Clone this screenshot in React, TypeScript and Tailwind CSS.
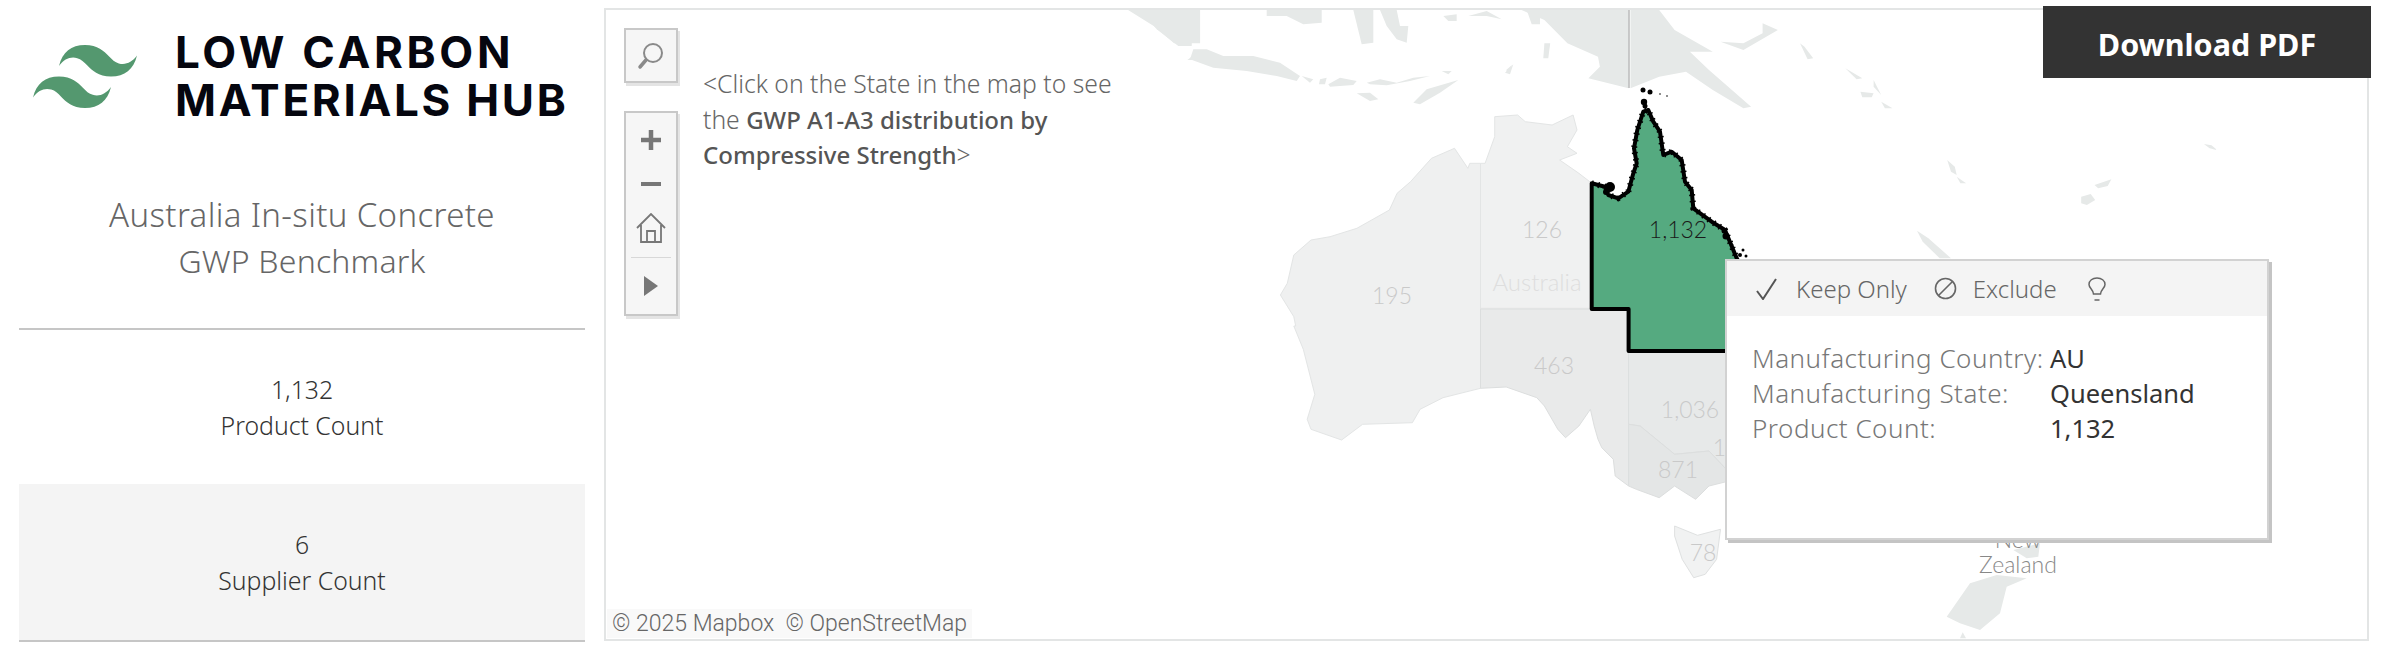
import React from "react";

type P = number[];
const conv = (ox: number, oy: number, sx: number, sy: number, a: P) => {
  const out: string[] = [];
  for (let i = 0; i < a.length; i += 2) out.push(`${(ox + a[i] / sx).toFixed(1)},${(oy + a[i + 1] / sy).toFixed(1)}`);
  return out.join(" ");
};
const z4 = (a: P) => conv(1200, 0, 2.613, 3, a);
const z5 = (a: P) => conv(1200, 326, 2.613, 3, a);
const z7 = (a: P) => conv(1800, 0, 2.649, 3, a);
const z9 = (a: P) => conv(1900, 500, 3, 3, a);
const z11 = (a: P) => conv(1120, 6, 3, 3, a);

const WA =
  z4([733, 490, 705, 490, 700, 505, 665, 445, 605, 475, 550, 545, 515, 580, 495, 630, 410, 685, 340, 710, 290, 720, 245, 765, 228, 850, 210, 885, 245, 950, 250, 978]) +
  " " +
  z5([245, 0, 270, 70, 300, 205, 280, 280, 290, 310, 370, 342, 425, 295, 555, 290, 575, 250, 635, 215, 733, 187]);
const NT = z4([733, 490, 745, 490, 770, 410, 770, 350, 830, 345, 850, 365, 920, 375, 975, 345, 985, 390, 960, 440, 985, 460, 940, 480, 990, 520, 1022, 548, 1022, 925, 733, 925]);
const SA =
  "1480.5,309 1628.6,309 " +
  z5([1120, 480, 1085, 450, 1080, 400, 1050, 365, 1040, 340, 1030, 300, 1020, 250, 990, 300, 955, 335, 935, 310, 900, 240, 880, 215, 800, 183, 733, 187]);
const NSW = z5([1120, 75, 1400, 75, 1400, 440, 1375, 430, 1330, 375, 1240, 385, 1150, 300, 1120, 295]);
const VIC = z5([1120, 295, 1150, 300, 1240, 385, 1330, 375, 1375, 430, 1400, 460, 1330, 480, 1295, 520, 1240, 480, 1200, 515, 1140, 490, 1120, 480]);
const TAS = z5([1240, 600, 1300, 628, 1360, 610, 1350, 700, 1320, 745, 1290, 755, 1260, 700, 1240, 630]);
const COAST = conv(1580, 80, 3, 3, [35, 310, 75, 320, 85, 345, 115, 355, 145, 335, 160, 280, 170, 250, 162, 205, 172, 150, 190, 95, 205, 90, 220, 125, 240, 155, 250, 225, 275, 215, 305, 240, 315, 305, 335, 330, 340, 385, 395, 425, 435, 450, 460, 510, 470, 535]);
const QLD = COAST + " 1760,300 1760,351 1628.6,351 1628.6,309 1591.7,309";

const lands: string[] = [
  z4([840, 30, 1120, 30, 1120, 265, 1015, 235, 1045, 200, 1040, 170, 960, 130, 900, 60]),
  z4([1125, 30, 1200, 30, 1240, 90, 1340, 155, 1280, 155, 1330, 210, 1440, 320, 1420, 325, 1340, 270, 1270, 215, 1200, 230, 1125, 265]),
  z4([1360, 125, 1420, 150, 1510, 90, 1470, 70, 1470, 100, 1420, 130]),
  z4([900, 130, 915, 130, 910, 175, 897, 175]),
  z4([800, 210, 815, 195, 805, 220]),
  z11([60, 12, 220, 12, 215, 120, 175, 120, 110, 70]),
  z11([220, 130, 260, 130, 310, 150, 400, 150, 480, 170, 540, 210, 530, 225, 470, 210, 380, 195, 280, 185, 210, 160]),
  z11([545, 210, 580, 220, 570, 230]),
  z11([600, 220, 620, 215, 615, 235, 597, 235]),
  z11([625, 235, 660, 215, 710, 225, 700, 237, 630, 242]),
  z11([740, 230, 780, 220, 830, 230, 880, 215, 930, 210, 870, 225, 800, 238, 750, 235]),
  z11([710, 262, 750, 260, 775, 280, 750, 285]),
  z11([880, 290, 920, 250, 1015, 222, 960, 260, 900, 295]),
  z11([965, 195, 995, 195, 985, 205]),
  z11([1155, 200, 1180, 175, 1170, 205]),
  z11([440, 12, 605, 12, 605, 50, 550, 55, 500, 30, 440, 30]),
  z11([700, 12, 760, 12, 760, 110, 725, 115]),
  z11([780, 12, 830, 12, 840, 60, 865, 60, 860, 110, 830, 100, 800, 60]),
  z11([970, 30, 1010, 25, 1010, 45, 985, 45]),
  z11([1045, 30, 1100, 15, 1145, 40, 1100, 30]),
  z11([1220, 12, 1260, 12, 1260, 55, 1235, 55]),
  conv(600, 0, 2.613, 3, [1380, 30, 1568, 30, 1568, 130, 1500, 130, 1450, 80]),
  conv(600, 0, 2.613, 3, [1535, 180, 1568, 150, 1568, 180]),
  z7([0, 130, 12, 140, 35, 175, 20, 178]),
  z7([120, 205, 165, 235, 150, 238]),
  z7([195, 240, 215, 285, 195, 260]),
  z7([160, 275, 195, 280, 190, 292, 165, 292]),
  z7([215, 305, 245, 325, 225, 325]),
  z7([390, 480, 410, 500, 415, 525, 400, 515]),
  z7([415, 530, 440, 550, 425, 550]),
  z7([310, 692, 340, 715, 400, 775, 370, 775, 325, 725]),
  z7([745, 590, 770, 582, 782, 600, 760, 615, 745, 610]),
  z7([780, 555, 825, 538, 815, 558, 790, 565]),
  z7([1070, 432, 1090, 436, 1105, 450, 1085, 445]),
  z9([140, 350, 210, 250, 290, 225, 380, 235, 320, 260, 300, 340, 240, 390, 180, 370]),
  z9([180, 415, 188, 397, 198, 415]),
  z9([340, 150, 420, 130, 415, 170, 380, 175]),
];

const labels: [string, number, number, string, number][] = [
  ["126", 1542, 238, "#c9c9c9", 23],
  ["195", 1392, 304, "#c9c9c9", 23],
  ["Australia", 1537, 291, "#dedede", 24],
  ["463", 1554, 374, "#c9c9c9", 23],
  ["1,036", 1690, 418, "#c9c9c9", 23],
  ["871", 1678, 478, "#c9c9c9", 23],
  ["15", 1726, 456, "#c9c9c9", 23],
  ["78", 1703, 561, "#c9c9c9", 23],
  ["New", 2018, 548, "#888888", 23],
  ["Zealand", 2018, 573, "#888888", 23],
];

function MapArt() {
  return (
    <svg className="absolute left-0 top-0" width={1761} height={629} viewBox="606 10 1761 629">
      <g className="blur-[0.7px]">
        {lands.map((p, i) => (
          <polygon key={i} points={p} fill="#e6e9e8" />
        ))}
      </g>
      <line x1="1629" y1="10" x2="1629" y2="88" stroke="#b8b8b8" strokeWidth="1.5" />
      <polygon points={WA} fill="#eff0f0" stroke="#e3e5e5" strokeWidth="1" />
      <polygon points={NT} fill="#f0f1f1" stroke="#e3e5e5" strokeWidth="1" />
      <polygon points={SA} fill="#e9eaea" stroke="#dcdede" strokeWidth="1" />
      <polygon points={NSW} fill="#e7e9e9" stroke="#dcdede" strokeWidth="1" />
      <polygon points={VIC} fill="#e4e6e6" stroke="#dcdede" strokeWidth="1" />
      <polygon points={TAS} fill="#f1f2f2" stroke="#dfe1e1" strokeWidth="1" />
      <polygon points={QLD} fill="#55aa80" stroke="#000000" strokeWidth="4" strokeLinejoin="round" />
      <polyline points={COAST} fill="none" stroke="#000000" strokeWidth="6" strokeDasharray="1.5 5" />
      {[
        [1610, 187, 5],
        [1606, 192, 3],
        [1643, 90, 2.5],
        [1650, 92, 2.5],
        [1644, 102, 3.2],
        [1645, 106, 2.5],
        [1726, 236, 3.5],
        [1724, 231, 2.5],
        [1743, 250, 1.5],
        [1740, 255, 2],
        [1746, 256, 1.5],
        [1732, 245, 1.5],
        [1660, 94, 0.8],
        [1667, 96, 0.8],
      ].map(([x, y, r], i) => (
        <circle key={i} cx={x} cy={y} r={r} fill="#000000" />
      ))}
      <g style={{ fontFamily: "Lato, sans-serif", fontWeight: 300 }} textAnchor="middle">
        {labels.map(([t, x, y, c, s]) => (
          <text key={t} x={x} y={y} fill={c} fontSize={s}>
            {t}
          </text>
        ))}
        <text x={1678} y={238} fill="#1a1a1a" fontSize={23}>
          1,132
        </text>
      </g>
    </svg>
  );
}

function Kpi({ value, label, gray }: { value: string; label: string; gray?: boolean }) {
  return (
    <div className={`flex flex-col items-center justify-center text-center text-[24.8px] leading-[36px] font-light text-[#333333] ${gray ? "h-[156px] bg-[#f4f4f4]" : "h-[154px] bg-white"}`}>
      <div>{value}</div>
      <div>{label}</div>
    </div>
  );
}

export default function App() {
  return (
    <div className="flex h-[652px] w-[2392px] overflow-hidden bg-white font-['Noto_Sans',sans-serif]">
      <aside className="flex w-[604px] flex-col px-[19px]">
        <div className="flex h-[130px] items-start pt-[28px]">
          <svg className="mt-[17px] ml-[14px] h-[63px] w-[104px]" viewBox="0 4.8 24 14.4" preserveAspectRatio="none">
            <path
              fill="#54986f"
              d="M12.001 4.8c-3.2 0-5.2 1.6-6 4.8 1.2-1.6 2.6-2.2 4.2-1.8.913.228 1.565.89 2.288 1.624C13.666 10.618 15.027 12 18.001 12c3.2 0 5.2-1.6 6-4.8-1.2 1.6-2.6 2.2-4.2 1.8-.913-.228-1.565-.89-2.288-1.624C16.337 6.182 14.976 4.8 12.001 4.8zm-6 7.2c-3.2 0-5.2 1.6-6 4.8 1.2-1.6 2.6-2.2 4.2-1.8.913.228 1.565.89 2.288 1.624 1.177 1.194 2.538 2.576 5.512 2.576 3.2 0 5.2-1.6 6-4.8-1.2 1.6-2.6 2.2-4.2 1.8-.913-.228-1.565-.89-2.288-1.624C10.337 13.382 8.976 12 6.001 12z"
            />
          </svg>
          <div className="ml-[38px] font-['Inter',sans-serif] text-[44px] leading-[48px] font-bold text-[#05060f]">
            <div className="tracking-[3.7px]">LOW CARBON</div>
            <div className="tracking-[2.7px]">MATERIALS HUB</div>
          </div>
        </div>
        <div className="flex h-[198px] flex-col pt-[62px] text-center text-[33px] leading-[46px] font-light tracking-[0.35px] text-[#666666]">
          <div>Australia In-situ Concrete</div>
          <div className="text-[32px] tracking-[0.2px]">GWP Benchmark</div>
        </div>
        <div className="h-[2px] bg-[#c6c6c6]" />
        <Kpi value="1,132" label="Product Count" />
        <Kpi value="6" label="Supplier Count" gray />
        <div className="h-[2px] bg-[#c6c6c6]" />
      </aside>

      <main className="relative mt-[8px] mr-[23px] mb-[11px] flex-1 border-2 border-[#e3e5e5]">
        <MapArt />

        <div className="absolute top-[-4px] right-[-4px] flex h-[72px] w-[328px] items-center justify-center bg-[#333333] pt-[5px] text-[30.5px] font-bold text-white">
          Download PDF
        </div>

        <div className="absolute top-[18px] left-[18px] flex h-[55px] w-[54px] items-center justify-center border-2 border-[#c8c8c8] bg-[#f6f6f6] shadow-[2px_3px_0_#e4e4e4]">
          <svg width="30" height="30" viewBox="0 0 30 30" fill="none" stroke="#8a8a8a">
            <circle cx="17" cy="12" r="9" strokeWidth="2" />
            <path d="M10 19 L4 26" strokeWidth="3.5" strokeLinecap="round" />
          </svg>
        </div>

        <div className="absolute top-[101px] left-[18px] flex h-[205px] w-[54px] flex-col items-center border-2 border-[#c8c8c8] bg-[#f6f6f6] pt-[16px] shadow-[2px_3px_0_#e4e4e4]">
          <svg width="22" height="22" viewBox="0 0 22 22" stroke="#777777" strokeWidth="4.5">
            <path d="M11 1 V21 M1 11 H21" />
          </svg>
          <svg className="mt-[31px]" width="22" height="4" viewBox="0 0 22 4">
            <rect width="20" height="4" x="1" fill="#777777" />
          </svg>
          <svg className="mt-[27px]" width="30" height="30" viewBox="0 0 30 30" fill="none" stroke="#777777" strokeWidth="1.8">
            <path d="M1 15 L15 1 L29 15 M5 12 V29 H25 V12 M11 29 V18 H19 V29" />
          </svg>
          <div className="mt-[14px] h-px w-[40px] bg-[#d8d8d8]" />
          <svg className="mt-[18px]" width="14" height="20" viewBox="0 0 14 20">
            <path d="M0 0 L14 10 L0 20 Z" fill="#777777" />
          </svg>
        </div>

        <div className="absolute top-[56px] left-[97px] w-[460px] text-[24.7px] leading-[35.5px] font-light text-[#666666]">
          &lt;Click on the State in the map to see
          <br />
          the <span className="text-[24px] font-medium text-[#555555]">GWP A1-A3 distribution by</span>
          <br />
          <span className="text-[24px] font-medium text-[#555555]">Compressive Strength</span>&gt;
        </div>

        <div className="absolute top-[599px] left-[1px] bg-[#f9f9f9] px-[5px] font-['Roboto',sans-serif] text-[23px] leading-[29px] font-light whitespace-pre text-[#666666]">
          © 2025 Mapbox  © OpenStreetMap
        </div>

        <div className="absolute top-[249px] left-[1119px] h-[281px] w-[544px] border-2 border-[#d2d2d2] bg-white shadow-[3px_3px_0_#c4c4c4]">
          <div className="flex h-[55px] items-center bg-[#f4f4f4] text-[24px] font-light text-[#666666]">
            <svg className="ml-[29px]" width="22" height="22" viewBox="0 0 22 22" fill="none" stroke="#555555" strokeWidth="2">
              <path d="M1 13 L7 21 L20 1" />
            </svg>
            <span className="ml-[18px]">Keep Only</span>
            <svg className="ml-[27px]" width="23" height="23" viewBox="0 0 23 23" fill="none" stroke="#666666" strokeWidth="1.6">
              <circle cx="11.5" cy="11.5" r="10" />
              <path d="M4.5 18.5 L18.5 4.5" />
            </svg>
            <span className="ml-[16px]">Exclude</span>
            <svg className="ml-[31px]" width="18" height="24" viewBox="0 0 18 24" fill="none" stroke="#666666" strokeWidth="1.5">
              <path d="M5.5 17 C5 12 1 11 1 7.5 C1 3.5 4.5 1 9 1 C13.5 1 17 3.5 17 7.5 C17 11 13 12 12.5 17 Z M6.5 23 H11.5" />
            </svg>
          </div>
          <div className="grid grid-cols-[298px_1fr] pt-[25px] pl-[25px] leading-[35px]">
            <span className="text-[26px] font-light tracking-[0.5px] text-[#777777]">Manufacturing Country:</span>
            <span className="text-[25.5px] text-[#333333]">AU</span>
            <span className="text-[26px] font-light tracking-[0.5px] text-[#777777]">Manufacturing State:</span>
            <span className="text-[25.5px] text-[#333333]">Queensland</span>
            <span className="text-[26px] font-light tracking-[0.5px] text-[#777777]">Product Count:</span>
            <span className="text-[25.5px] text-[#333333]">1,132</span>
          </div>
        </div>
      </main>
    </div>
  );
}
